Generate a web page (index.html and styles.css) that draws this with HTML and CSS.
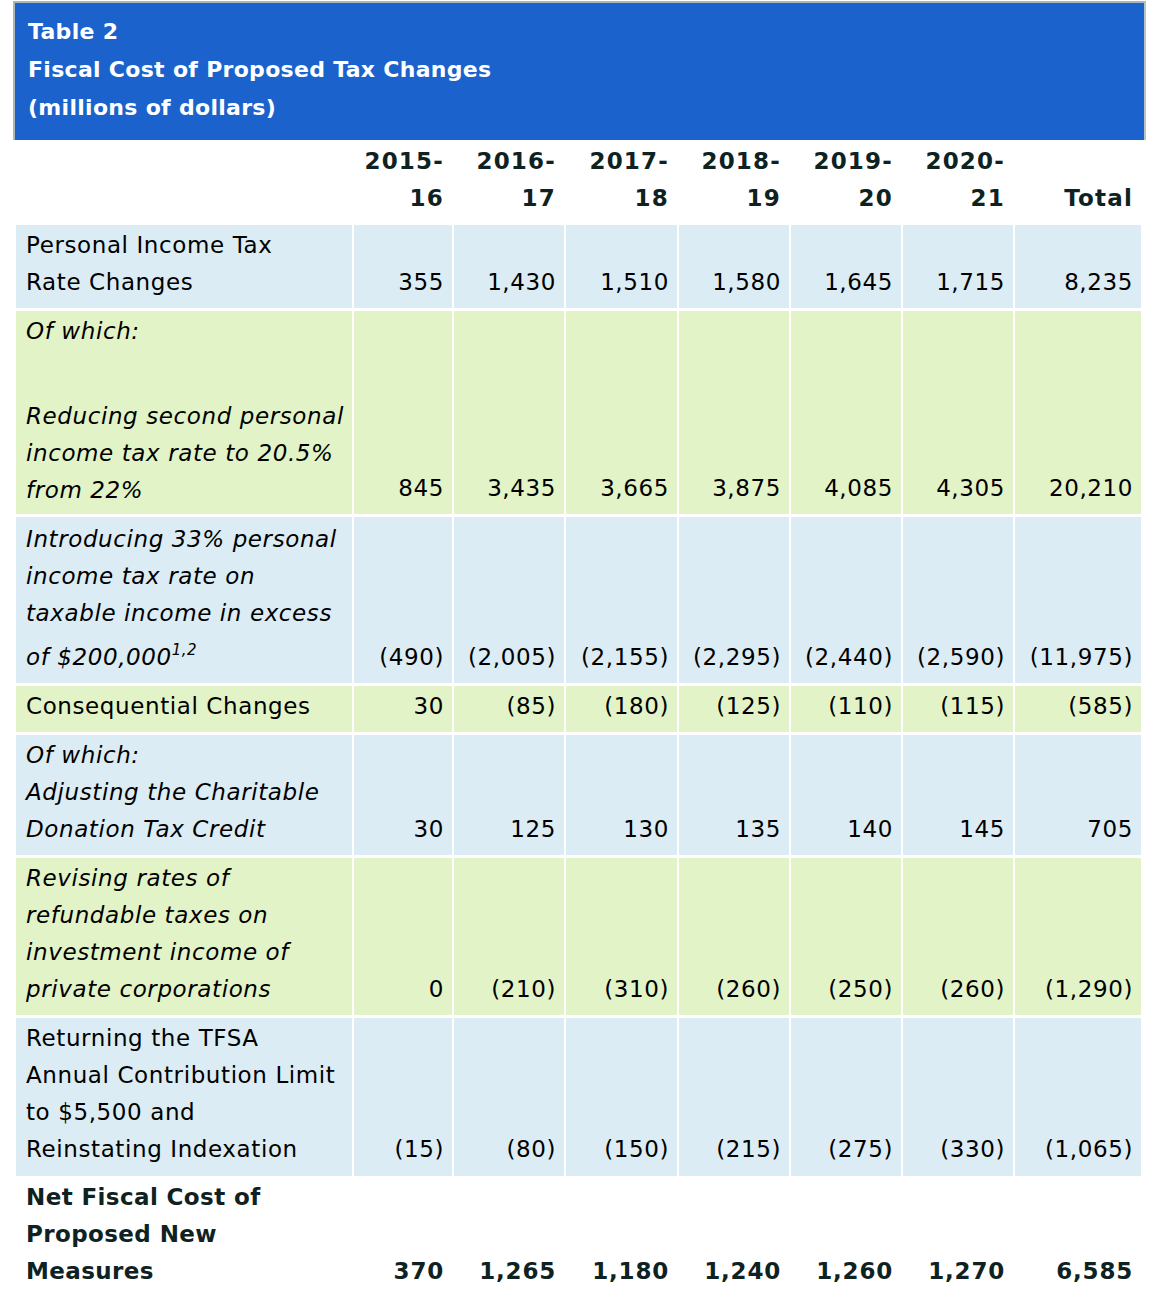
FILE: index.html
```html
<!DOCTYPE html>
<html lang="en">
<head>
<meta charset="utf-8">
<title>Table 2 - Fiscal Cost of Proposed Tax Changes</title>
<link rel="stylesheet" href="styles.css">
</head>
<body>
<div class="page">
  <div class="caption">
    <div>Table 2</div>
    <div>Fiscal Cost of Proposed Tax Changes</div>
    <div>(millions of dollars)</div>
  </div>
  <table class="fiscal">
    <colgroup>
      <col class="c-label">
      <col class="c-y1">
      <col class="c-y">
      <col class="c-y4">
      <col class="c-y">
      <col class="c-y">
      <col class="c-y">
      <col class="c-total">
    </colgroup>
    <thead>
      <tr>
        <th class="label"></th>
        <th>2015-<br>16</th>
        <th>2016-<br>17</th>
        <th>2017-<br>18</th>
        <th>2018-<br>19</th>
        <th>2019-<br>20</th>
        <th>2020-<br>21</th>
        <th>Total</th>
      </tr>
    </thead>
    <tbody>
      <tr class="blue">
        <td class="label">Personal Income Tax<br>Rate Changes</td>
        <td>355</td><td>1,430</td><td>1,510</td><td>1,580</td><td>1,645</td><td>1,715</td><td>8,235</td>
      </tr>
      <tr class="green">
        <td class="label label-split"><em class="of-which">Of which:</em><em>Reducing second personal<br>income tax rate to 20.5%<br>from 22%</em></td>
        <td>845</td><td>3,435</td><td>3,665</td><td>3,875</td><td>4,085</td><td>4,305</td><td>20,210</td>
      </tr>
      <tr class="blue row-sup">
        <td class="label"><em>Introducing 33% personal<br>income tax rate on<br>taxable income in excess<br>of $200,000<sup>1,2</sup></em></td>
        <td>(490)</td><td>(2,005)</td><td>(2,155)</td><td>(2,295)</td><td>(2,440)</td><td>(2,590)</td><td>(11,975)</td>
      </tr>
      <tr class="green">
        <td class="label">Consequential Changes</td>
        <td>30</td><td>(85)</td><td>(180)</td><td>(125)</td><td>(110)</td><td>(115)</td><td>(585)</td>
      </tr>
      <tr class="blue">
        <td class="label"><em>Of which:<br>Adjusting the Charitable<br>Donation Tax Credit</em></td>
        <td>30</td><td>125</td><td>130</td><td>135</td><td>140</td><td>145</td><td>705</td>
      </tr>
      <tr class="green">
        <td class="label"><em>Revising rates of<br>refundable taxes on<br>investment income of<br>private corporations</em></td>
        <td>0</td><td>(210)</td><td>(310)</td><td>(260)</td><td>(250)</td><td>(260)</td><td>(1,290)</td>
      </tr>
      <tr class="blue row-tall">
        <td class="label">Returning the TFSA<br>Annual Contribution Limit<br>to $5,500 and<br>Reinstating Indexation</td>
        <td>(15)</td><td>(80)</td><td>(150)</td><td>(215)</td><td>(275)</td><td>(330)</td><td>(1,065)</td>
      </tr>
      <tr class="net">
        <td class="label">Net Fiscal Cost of<br>Proposed New<br>Measures</td>
        <td>370</td><td>1,265</td><td>1,180</td><td>1,240</td><td>1,260</td><td>1,270</td><td>6,585</td>
      </tr>
    </tbody>
  </table>
</div>
</body>
</html>
```

FILE: styles.css
```css
html, body {
  margin: 0;
  padding: 0;
  background: #ffffff;
}

body {
  font-family: "DejaVu Sans", Verdana, sans-serif;
  color: #000000;
}

.page {
  padding: 1px 0 0 13px;
}

.caption {
  width: 1103px;
  background: #1c62cc;
  border-top: 2px solid #a9b8b8;
  border-left: 2px solid #a9b8b8;
  border-right: 2px solid #b8c4c4;
  padding: 10px 13px 13px 13px;
  color: #ffffff;
  font-weight: bold;
  font-size: 22px;
  letter-spacing: 0.3px;
  line-height: 38px;
}

.fiscal {
  margin-left: 1px;
  width: 1129px;
  table-layout: fixed;
  border-collapse: separate;
  border-spacing: 2px 3px;
  font-size: 23px;
  letter-spacing: 0.6px;
  line-height: 37px;
}

.c-label { width: 336px; }
.c-y1 { width: 98px; }
.c-y { width: 110px; }
.c-y4 { width: 111px; }
.c-total { width: 126px; }

.fiscal th,
.fiscal td {
  padding: 2px 8px 7px 10px;
  text-align: right;
  vertical-align: bottom;
  white-space: nowrap;
}

.fiscal th {
  padding-top: 0;
  padding-bottom: 5px;
  font-weight: bold;
  letter-spacing: 1.2px;
  color: #0f2222;
}

.fiscal .label {
  text-align: left;
  vertical-align: top;
}

.fiscal em {
  font-style: italic;
}

.fiscal .of-which {
  display: block;
  margin-bottom: 48px;
}

.fiscal .label-split {
  padding-bottom: 5px;
}

.row-sup td.label {
  padding-top: 4px;
}

.fiscal sup {
  font-size: 15px;
  letter-spacing: 0.4px;
  vertical-align: 10px;
}

.row-tall td {
  padding-bottom: 8px;
}

.blue td {
  background: #dcecf4;
}

.green td {
  background: #e2f3c7;
}

.net td {
  font-weight: bold;
  color: #0f2222;
  padding-top: 0;
  letter-spacing: 0.8px;
}

.net td.label {
  letter-spacing: 0.4px;
}
```
